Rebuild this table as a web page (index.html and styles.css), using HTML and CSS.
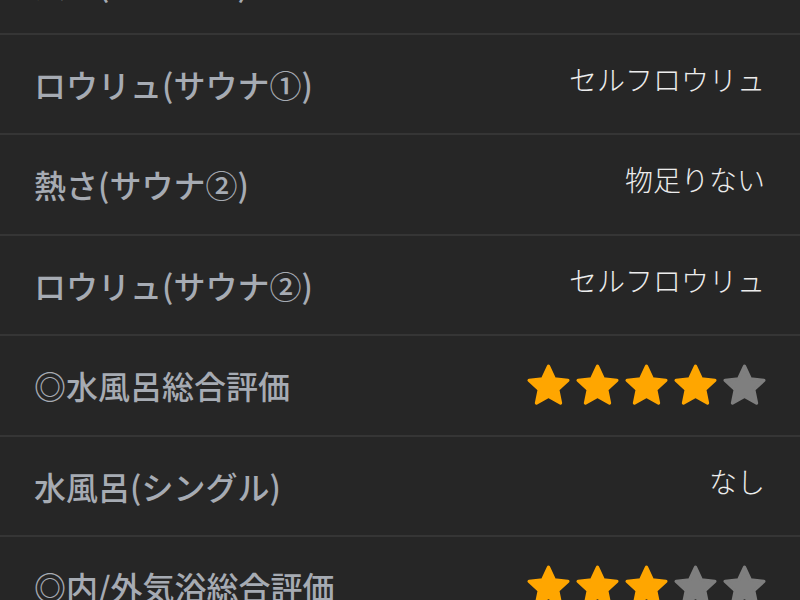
FILE: index.html
```html
<!DOCTYPE html>
<html lang="ja">
<head>
<meta charset="utf-8">
<link rel="stylesheet" href="styles.css">
</head>
<body>
<svg width="0" height="0" class="defs">
  <defs>
    <symbol id="star" viewBox="0 0 24 24">
      <path d="M12 2.6l2.85 6.1 6.65.75-4.95 4.55 1.35 6.6L12 17.3l-5.9 3.3 1.35-6.6L2.5 9.45l6.65-.75z" stroke-linejoin="round" stroke-width="1.6"/>
    </symbol>
  </defs>
</svg>
<div class="list">
  <div class="row"><span class="label">熱さ(サウナ①)</span><span class="value">物足りない</span></div>
  <div class="row"><span class="label">ロウリュ(サウナ①)</span><span class="value">セルフロウリュ</span></div>
  <div class="row"><span class="label">熱さ(サウナ②)</span><span class="value">物足りない</span></div>
  <div class="row"><span class="label">ロウリュ(サウナ②)</span><span class="value">セルフロウリュ</span></div>
  <div class="row"><span class="label">◎水風呂総合評価</span>
    <span class="stars">
      <svg class="star on"><use href="#star"/></svg><svg class="star on"><use href="#star"/></svg><svg class="star on"><use href="#star"/></svg><svg class="star on"><use href="#star"/></svg><svg class="star off"><use href="#star"/></svg>
    </span>
  </div>
  <div class="row"><span class="label">水風呂(シングル)</span><span class="value">なし</span></div>
  <div class="row"><span class="label">◎内/外気浴総合評価</span>
    <span class="stars">
      <svg class="star on"><use href="#star"/></svg><svg class="star on"><use href="#star"/></svg><svg class="star on"><use href="#star"/></svg><svg class="star off"><use href="#star"/></svg><svg class="star off"><use href="#star"/></svg>
    </span>
  </div>
</div>
</body>
</html>
```
FILE: styles.css
```css
html, body {
  margin: 0;
  padding: 0;
  background: #262626;
  overflow: hidden;
}
.defs {
  position: absolute;
}
.list {
  margin-top: -66px;
  font-family: "Noto Sans CJK JP", "Noto Sans", sans-serif;
}
.row {
  height: 98.5px;
  border-bottom: 2px solid #353535;
  display: flex;
  align-items: center;
  justify-content: space-between;
  padding: 0 35px 0 34px;
}
.label {
  font-size: 32px;
  font-weight: 500;
  color: #a6abb3;
}
.value {
  font-size: 28px;
  font-weight: 300;
  color: #ececec;
  padding-bottom: 10px;
}
.stars {
  display: flex;
  gap: 0;
  margin-right: -3.5px;
}
.star {
  width: 49px;
  height: 49px;
}
.star.on {
  fill: #ffa600;
  stroke: #ffa600;
}
.star.off {
  fill: #7f7f7f;
  stroke: #7f7f7f;
}
```
